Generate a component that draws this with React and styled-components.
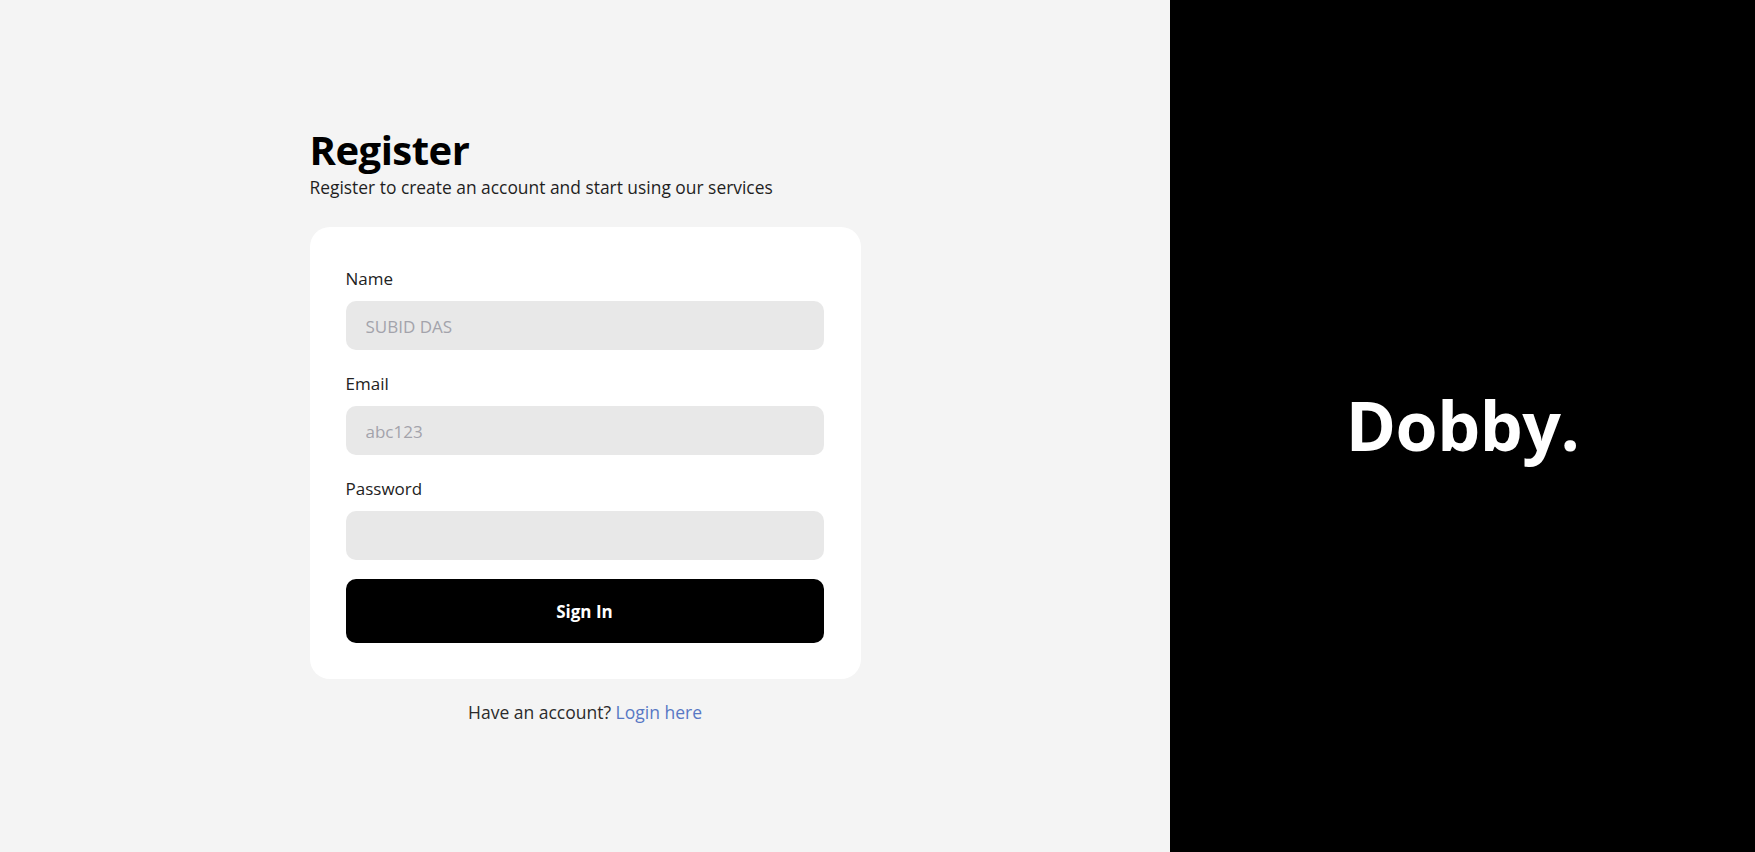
import styled, { createGlobalStyle } from "styled-components";

const GlobalStyle = createGlobalStyle`
  * {
    box-sizing: border-box;
  }
  body {
    margin: 0;
    font-family: "Open Sans", "Noto Sans", Arial, sans-serif;
    color: #1f1f1f;
  }
`;

const Page = styled.div`
  display: grid;
  grid-template-columns: 2fr 1fr;
  height: 852px;
`;

const Left = styled.section`
  background-color: #f4f4f4;
  display: flex;
  align-items: center;
  justify-content: center;
`;

const Right = styled.section`
  background-color: #000;
  display: flex;
  align-items: center;
  justify-content: center;
`;

const Brand = styled.h1`
  margin: 0 0 4px;
  color: #fff;
  font-size: 68px;
  font-weight: 700;
  letter-spacing: -0.5px;
`;

const FormWrap = styled.div`
  width: 551px;
  display: flex;
  flex-direction: column;
`;

const Title = styled.h2`
  margin: 0;
  font-size: 40px;
  line-height: 44px;
  font-weight: 700;
  color: #000;
  letter-spacing: -0.5px;
`;

const Subtitle = styled.p`
  margin: 3px 0 0;
  font-size: 17.4px;
  line-height: 24px;
  color: #1f1f1f;
`;

const Card = styled.form`
  margin-top: 28px;
  background-color: #fff;
  border-radius: 20px;
  padding: 40px 37px 36px 36px;
  display: flex;
  flex-direction: column;
  gap: 22px;
`;

const Field = styled.div`
  display: flex;
  flex-direction: column;
  gap: 10px;
`;

const Label = styled.label`
  font-size: 17px;
  line-height: 24px;
  color: #222;
`;

const Input = styled.input`
  height: 49px;
  border: none;
  outline: none;
  border-radius: 10px;
  background-color: #e8e8e8;
  padding: 2px 20px 0;
  font-family: inherit;
  font-size: 17px;
  color: #222;

  &::placeholder {
    color: #a3a3ab;
  }
`;

const Button = styled.button`
  margin-top: -3px;
  height: 64px;
  border: none;
  border-radius: 10px;
  background-color: #000;
  color: #fff;
  font-family: inherit;
  font-size: 17px;
  font-weight: 700;
  cursor: pointer;
`;

const Footnote = styled.p`
  margin: 21px 0 0;
  text-align: center;
  font-size: 17.5px;
  line-height: 24px;
  color: #2b2b2b;
`;

const LinkText = styled.a`
  color: #5878c4;
  text-decoration: none;
  cursor: pointer;
`;

const App = () => {
  return (
    <>
      <GlobalStyle />
      <Page>
        <Left>
          <FormWrap>
            <Title>Register</Title>
            <Subtitle>Register to create an account and start using our services</Subtitle>
            <Card onSubmit={(e) => e.preventDefault()}>
              <Field>
                <Label>Name</Label>
                <Input type="text" placeholder="SUBID DAS" />
              </Field>
              <Field>
                <Label>Email</Label>
                <Input type="text" placeholder="abc123" />
              </Field>
              <Field>
                <Label>Password</Label>
                <Input type="password" />
              </Field>
              <Button type="submit">Sign In</Button>
            </Card>
            <Footnote>
              Have an account? <LinkText>Login here</LinkText>
            </Footnote>
          </FormWrap>
        </Left>
        <Right>
          <Brand>Dobby.</Brand>
        </Right>
      </Page>
    </>
  );
};

export default App;
